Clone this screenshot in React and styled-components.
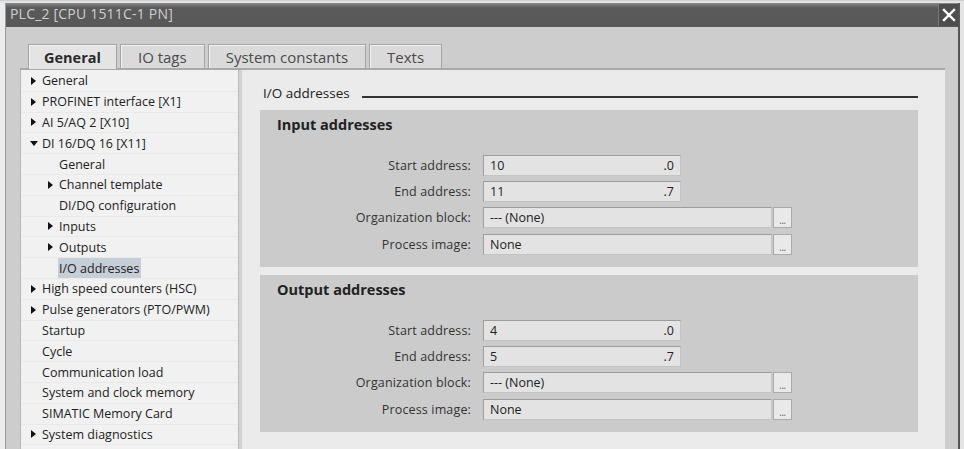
import React from "react";
import styled, { createGlobalStyle } from "styled-components";

const Global = createGlobalStyle`
  html, body { margin: 0; padding: 0; background: #e6e6e6; }
  body { font-family: "Open Sans", "Noto Sans", sans-serif; }
  #root { width: 964px; height: 449px; overflow: hidden; }
  * { box-sizing: border-box; }
`;

const Screen = styled.div`
  width: 964px;
  height: 449px;
  display: flex;
  padding: 2px 4px 0 0;
  background: #e4e4e4;
  border-top: 1px solid #cfcfcf;
`;

const BackStrip = styled.div`
  width: 6px;
  flex: none;
  background: #ececec;
  border-right: 1px solid #9a9a9a;
`;

const Dialog = styled.div`
  flex: 1;
  display: flex;
  flex-direction: column;
  border-right: 2px solid #555;
  min-width: 0;
`;

const TitleBar = styled.div`
  height: 24px;
  flex: none;
  display: flex;
  align-items: center;
  justify-content: space-between;
  background: linear-gradient(#8a8a8a 0, #6a6a6a 3px, #5a5a5a 5px, #585858 100%);
  padding-left: 4px;
`;

const TitleText = styled.span`
  color: #cfcfcf;
  font-size: 14px;
  letter-spacing: 0.2px;
  margin-top: -3px;
`;

const CloseBtn = styled.div`
  width: 20px;
  height: 22px;
  display: flex;
  align-items: center;
  justify-content: center;
  background: #4d4d4d;
  border-left: 1px solid #7a7a7a;
`;

const Body = styled.div`
  flex: 1;
  background: #cdcdcd;
  padding: 17px 13px 0 14px;
  display: flex;
  flex-direction: column;
  min-height: 0;
`;

const Tabs = styled.div`
  display: flex;
  gap: 3px;
  padding-left: 8px;
  height: 24px;
  flex: none;
`;

const Tab = styled.div`
  height: ${(p) => (p.$active ? "25px" : "24px")};
  padding: 0 ${(p) => (p.$active ? "15px" : "17px")};
  display: flex;
  align-items: center;
  font-size: ${(p) => (p.$active ? "14.5px" : "15px")};
  font-weight: ${(p) => (p.$active ? 700 : 400)};
  color: ${(p) => (p.$active ? "#2a2a2a" : "#4a4a4a")};
  background: ${(p) => (p.$active ? "#e4e4e4" : "#dadada")};
  border: 1px solid #a4a4a4;
  border-bottom: none;
  box-shadow: inset 1px 1px 0 #f2f2f2;
  position: relative;
  z-index: ${(p) => (p.$active ? 2 : 1)};
`;

const Panel = styled.div`
  flex: 1;
  display: flex;
  border-top: 2px solid #a9a9a9;
  min-height: 0;
`;

const Nav = styled.div`
  width: 218px;
  flex: none;
  background: #f1f1f1;
  border-left: 1px solid #b8b8b8;
  padding-top: 1px;
`;

const NavRow = styled.div`
  height: 20.8px;
  display: flex;
  align-items: center;
  padding-left: ${(p) => 10 + p.$level * 17}px;
  font-size: 12.5px;
  color: #222;
  border-bottom: 1px solid #e9e9e9;
`;

const Arrow = styled.span`
  width: 11px;
  flex: none;
  display: flex;
  align-items: center;
  &::before {
    content: "";
    display: block;
    ${(p) =>
      p.$open
        ? `border-left: 4px solid transparent; border-right: 4px solid transparent; border-top: 5px solid #111; margin-left: -1px;`
        : `border-top: 4px solid transparent; border-bottom: 4px solid transparent; border-left: 5px solid #111;`}
  }
`;

const NavLabel = styled.span`
  padding: 0 2px 0 1px;
  margin-left: -1px;
  height: 20px;
  display: flex;
  align-items: center;
  background: ${(p) => (p.$selected ? "#c6ced7" : "transparent")};
  white-space: nowrap;
`;

const Splitter = styled.div`
  width: 4px;
  flex: none;
  background: #d2d2d2;
  border-left: 1px solid #bcbcbc;
`;

const Main = styled.div`
  flex: 1;
  background: #ebebeb;
  padding: 14px 27px 0 18px;
  display: flex;
  flex-direction: column;
  gap: 8px;
`;

const SectionHead = styled.div`
  display: flex;
  align-items: center;
  gap: 12px;
  padding-left: 3px;
  height: 18px;
`;

const SectionTitle = styled.span`
  font-size: 13.5px;
  color: #222;
`;

const SectionLine = styled.div`
  flex: 1;
  height: 1.5px;
  background: #333;
  margin-top: 8px;
`;

const Group = styled.div`
  height: 157px;
  background: #cbcbcb;
  padding: 5px 0 0 17px;
  display: flex;
  flex-direction: column;
`;

const GroupTitle = styled.div`
  font-size: 14.5px;
  font-weight: 700;
  color: #222;
  height: 18px;
  display: flex;
  align-items: center;
  margin-bottom: 22px;
`;

const Rows = styled.div`
  display: flex;
  flex-direction: column;
  gap: 5.2px;
`;

const Row = styled.div`
  display: flex;
  align-items: center;
  height: 21px;
`;

const Label = styled.span`
  width: 195px;
  text-align: right;
  font-size: 12.5px;
  color: #333;
  padding-right: 1px;
  letter-spacing: 0.15px;
`;

const Field = styled.div`
  margin-left: 11px;
  width: ${(p) => p.$w}px;
  height: 21px;
  background: #e3e3e3;
  border: 1px solid #9c9c9c;
  border-right-color: #c4c4c4;
  border-bottom-color: #c4c4c4;
  display: flex;
  align-items: center;
  justify-content: space-between;
  padding: 0 6px;
  font-size: 12.5px;
  color: #222;
`;

const DotsBtn = styled.div`
  width: 19px;
  height: 21px;
  margin-left: 1px;
  background: #e9e9e9;
  border: 1px solid #aaa;
  display: flex;
  align-items: flex-end;
  justify-content: center;
  font-size: 10px;
  line-height: 14px;
  color: #666;
  letter-spacing: -0.5px;
`;

const navItems = [
  { t: "General", l: 0, a: true },
  { t: "PROFINET interface [X1]", l: 0, a: true },
  { t: "AI 5/AQ 2 [X10]", l: 0, a: true },
  { t: "DI 16/DQ 16 [X11]", l: 0, a: true, open: true },
  { t: "General", l: 1 },
  { t: "Channel template", l: 1, a: true },
  { t: "DI/DQ configuration", l: 1 },
  { t: "Inputs", l: 1, a: true },
  { t: "Outputs", l: 1, a: true },
  { t: "I/O addresses", l: 1, sel: true },
  { t: "High speed counters (HSC)", l: 0, a: true },
  { t: "Pulse generators (PTO/PWM)", l: 0, a: true },
  { t: "Startup", l: 0 },
  { t: "Cycle", l: 0 },
  { t: "Communication load", l: 0 },
  { t: "System and clock memory", l: 0 },
  { t: "SIMATIC Memory Card", l: 0 },
  { t: "System diagnostics", l: 0, a: true },
];

function AddrGroup({ title, start, end }) {
  return (
    <Group>
      <GroupTitle>{title}</GroupTitle>
      <Rows>
        <Row>
          <Label>Start address:</Label>
          <Field $w={198}>
            <span>{start}</span>
            <span>.0</span>
          </Field>
        </Row>
        <Row>
          <Label>End address:</Label>
          <Field $w={198}>
            <span>{end}</span>
            <span>.7</span>
          </Field>
        </Row>
        <Row>
          <Label>Organization block:</Label>
          <Field $w={289}>
            <span>--- (None)</span>
          </Field>
          <DotsBtn>...</DotsBtn>
        </Row>
        <Row>
          <Label>Process image:</Label>
          <Field $w={289}>
            <span>None</span>
          </Field>
          <DotsBtn>...</DotsBtn>
        </Row>
      </Rows>
    </Group>
  );
}

export default function App() {
  return (
    <>
      <Global />
      <Screen>
        <BackStrip />
        <Dialog>
          <TitleBar>
            <TitleText>PLC_2 [CPU 1511C-1 PN]</TitleText>
            <CloseBtn>
              <svg width="14" height="14" viewBox="0 0 14 14">
                <path d="M2 2 L12 12 M12 2 L2 12" stroke="#fff" strokeWidth="2.4" strokeLinecap="square" />
              </svg>
            </CloseBtn>
          </TitleBar>
          <Body>
            <Tabs>
              <Tab $active>General</Tab>
              <Tab>IO tags</Tab>
              <Tab>System constants</Tab>
              <Tab>Texts</Tab>
            </Tabs>
            <Panel>
              <Nav>
                {navItems.map((it, i) => (
                  <NavRow key={i} $level={it.a ? it.l : it.l + 0.65}>
                    {it.a ? <Arrow $open={it.open} /> : null}
                    <NavLabel $selected={it.sel}>{it.t}</NavLabel>
                  </NavRow>
                ))}
              </Nav>
              <Splitter />
              <Main>
                <SectionHead>
                  <SectionTitle>I/O addresses</SectionTitle>
                  <SectionLine />
                </SectionHead>
                <AddrGroup title="Input addresses" start="10" end="11" />
                <AddrGroup title="Output addresses" start="4" end="5" />
              </Main>
            </Panel>
          </Body>
        </Dialog>
      </Screen>
    </>
  );
}
